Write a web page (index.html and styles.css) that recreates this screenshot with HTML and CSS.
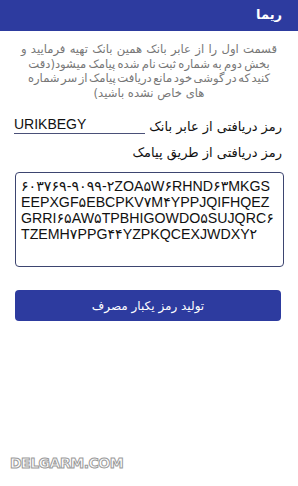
FILE: index.html
```html
<!DOCTYPE html>
<html lang="fa">
<head>
<meta charset="utf-8">
<link rel="stylesheet" href="styles.css">
</head>
<body>
<header class="bar"><span class="bar-title">ریما</span></header>
<main class="content">
  <p class="intro"><span class="loose">قسمت اول را از عابر بانک همین بانک تهیه فرمایید و</span><br><span class="snug">بخش دوم به شماره ثبت نام شده پیامک میشود(دقت</span><br><span class="tight">کنید که در گوشی خود مانع دریافت پیامک از سر شماره</span><br>های خاص نشده باشید)</p>
  <div class="row">
    <span class="label">رمز دریافتی از عابر بانک</span>
    <span class="field">URIKBEGY</span>
  </div>
  <div class="label label-2">رمز دریافتی از طریق پیامک</div>
  <div class="code">۶۰۳۷۶۹-۹۰۹۹-۲ZOA۵W۶RHND۶۳MKGS<br>EEPXGF۵EBCPKV۷M۴YPPJQIFHQEZ<br>GRRI۶۵AW۵TPBHIGOWDO۵SUJQRC۶<br>TZEMH۷PPG۴۴YZPKQCEXJWDXY۲</div>
  <button class="btn">تولید رمز یکبار مصرف</button>
</main>
<div class="mark">DELGARM.COM</div>
</body>
</html>
```
FILE: styles.css
```css
html, body {
  margin: 0;
  padding: 0;
  background: #fff;
  width: 298px;
  height: 486px;
  overflow: hidden;
}
body {
  font-family: "DejaVu Sans", sans-serif;
  direction: rtl;
  position: relative;
}
.bar {
  height: 31px;
  background: #2d3b9f;
  display: flex;
  align-items: center;
  padding: 0 16px;
}
.bar-title {
  color: #fff;
  font-size: 13px;
  font-weight: bold;
  margin-top: -2px;
}
.content {
  padding: 0 14px;
}
.intro {
  margin: 11px -6px 0;
  color: #777;
  font-size: 11.6px;
  line-height: 14.5px;
  text-align: center;
  white-space: nowrap;
}
.loose {
  word-spacing: 0.6px;
}
.snug {
  word-spacing: -1.4px;
}
.tight {
  word-spacing: -2.2px;
}
.row {
  display: flex;
  align-items: flex-end;
  justify-content: space-between;
  margin-top: 16px;
  padding-right: 2px;
}
.label {
  color: #111;
  font-size: 13px;
  line-height: 18px;
}
.field {
  direction: ltr;
  width: 131px;
  border-bottom: 1px solid #4a5078;
  font-family: "Liberation Sans", sans-serif;
  font-size: 14px;
  line-height: 16px;
  color: #111;
  padding: 0 0 1px 0;
  margin-bottom: 2px;
}
.label-2 {
  margin-top: 8px;
  padding-right: 2px;
}
.code {
  direction: ltr;
  margin-top: 10px;
  height: 82px;
  border: 1.5px solid #3d4570;
  border-radius: 4px;
  padding: 5px 4px 6px 5px;
  width: 258px;
  font-family: "Liberation Sans", "DejaVu Sans", sans-serif;
  font-size: 14.2px;
  line-height: 16px;
  color: #111;
  white-space: nowrap;
}
.btn {
  display: block;
  margin: 23px 3px 0 1px;
  width: 266px;
  height: 31px;
  background: #2d3b9f;
  color: #fff;
  border: 0;
  border-radius: 4px;
  font-family: "DejaVu Sans", sans-serif;
  font-size: 12px;
}
.mark {
  position: absolute;
  left: 10px;
  top: 455px;
  direction: ltr;
  font-family: "DejaVu Sans", sans-serif;
  font-weight: bold;
  font-size: 14px;
  letter-spacing: -0.5px;
  color: #fff;
  -webkit-text-stroke: 1px #9a9a9a;
}
```
